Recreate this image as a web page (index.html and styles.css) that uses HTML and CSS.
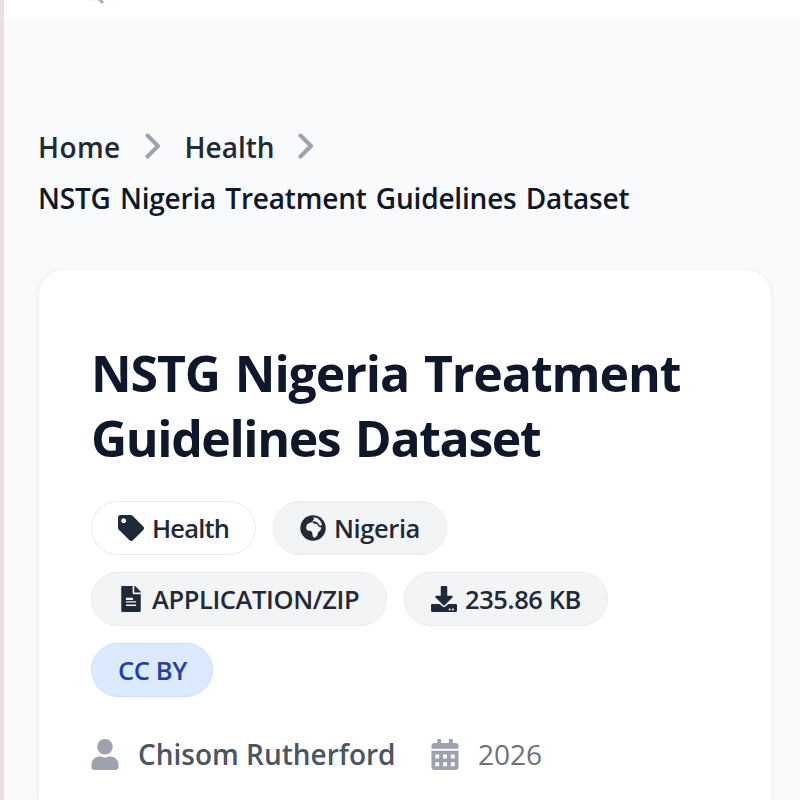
FILE: index.html
```
<!DOCTYPE html>
<html lang="en">
<head>
  <meta charset="UTF-8">
  <meta name="viewport" content="width=device-width, initial-scale=1.0">
  <title>NSTG Nigeria Treatment Guidelines Dataset</title>
  <link rel="stylesheet" href="styles.css">
</head>
<body>

  <header class="topbar">
    <svg class="search-icon" viewBox="0 0 24 24"><circle cx="10" cy="10" r="8"/><path class="handle" d="M17 17l5 5"/></svg>
  </header>

  <main class="page">
    <nav class="breadcrumb">
      <a class="crumb home" href="#">Home</a>
      <svg class="chevron" viewBox="0 0 16 26"><path d="M2.500 2.500L13 13 2.500 23.500"/></svg>
      <a class="crumb health" href="#">Health</a>
      <svg class="chevron" viewBox="0 0 16 26"><path d="M2.500 2.500L13 13 2.500 23.500"/></svg>
      <span class="current">NSTG Nigeria Treatment Guidelines Dataset</span>
    </nav>

    <section class="card">
      <h1 class="title">NSTG Nigeria Treatment<br><span class="title-end">Guidelines Dataset</span></h1>

      <div class="badges">
        <span class="badge badge-light">
          <svg class="icon" viewBox="0 0 512 512"><path d="M0 252.118V48C0 21.49 21.49 0 48 0h204.118a48 48 0 0 1 33.941 14.059l211.882 211.882c18.744 18.745 18.744 49.137 0 67.882L293.823 497.941c-18.745 18.744-49.137 18.744-67.882 0L14.059 286.059A48 48 0 0 1 0 252.118zM112 64c-26.51 0-48 21.49-48 48s21.49 48 48 48 48-21.49 48-48-21.49-48-48-48z"/></svg>
          <span>Health</span>
        </span>
        <span class="badge badge-region">
          <svg class="icon" viewBox="0 0 512 512"><circle cx="256" cy="256" r="250"/><path class="land" d="M180 158l65-22 30 34 60 6 40 60 48 8-24 62-44 40-18 62-50 44-36-28-10-75-25-36-72-10-26-48 18-66zM262 42l75 16 62 56 36 76-42 26-36-60-56-30-64-4 40-38z"/></svg>
          <span>Nigeria</span>
        </span>
        <span class="badge badge-format">
          <svg class="icon" viewBox="-64 0 512 512"><path d="M224 136V0H24C10.700 0 0 10.700 0 24v464c0 13.300 10.700 24 24 24h336c13.300 0 24-10.700 24-24V160H248c-13.200 0-24-10.800-24-24zM384 121.900v6.100H256V0h6.100c6.400 0 12.500 2.500 17 7l97.900 98c4.500 4.500 7 10.600 7 16.900z"/><path class="land" d="M92 230h140v44H92zM92 302h200v22H92zM92 362h200v30H92z"/></svg>
          <span>APPLICATION/ZIP</span>
        </span>
        <span class="badge badge-size">
          <svg class="icon" viewBox="0 0 512 512"><path d="M216 0h80c13.300 0 24 10.700 24 24v168h87.700c17.800 0 26.700 21.500 14.100 34.100L269.700 378.300c-7.500 7.500-19.800 7.500-27.300 0L90.100 226.100c-12.600-12.600-3.700-34.100 14.100-34.100H192V24c0-13.300 10.700-24 24-24zm296 376v112c0 13.300-10.700 24-24 24H24c-13.300 0-24-10.700-24-24V376c0-13.300 10.700-24 24-24h146.700l49 49c20.100 20.100 52.500 20.100 72.600 0l49-49H488c13.300 0 24 10.700 24 24zm-124 88c0-11-9-20-20-20s-20 9-20 20 9 20 20 20 20-9 20-20zm64 0c0-11-9-20-20-20s-20 9-20 20 9 20 20 20 20-9 20-20z"/></svg>
          <span>235.86 KB</span>
        </span>
        <span class="badge badge-license"><span>CC BY</span></span>
      </div>

      <div class="meta">
        <span class="meta-item author">
          <svg class="meta-icon" viewBox="0 0 448 512"><path d="M224 256c70.700 0 128-57.300 128-128S294.700 0 224 0 96 57.300 96 128s57.300 128 128 128zm89.600 32h-16.700c-22.200 10.200-46.900 16-72.900 16s-50.600-5.800-72.900-16h-16.700C60.200 288 0 348.200 0 422.400V464c0 26.500 21.500 48 48 48h352c26.500 0 48-21.500 48-48v-41.600c0-74.200-60.200-134.400-134.400-134.400z"/></svg>
          <span>Chisom Rutherford</span>
        </span>
        <span class="meta-item year">
          <svg class="meta-icon" viewBox="0 0 448 512"><path fill-rule="evenodd" d="M0 160v-48c0-26.500 21.500-48 48-48h48V12q0-12 12-12h40q12 0 12 12v52h128V12q0-12 12-12h40q12 0 12 12v52h48c26.500 0 48 21.500 48 48v48zM0 192h448v272c0 26.500-21.500 48-48 48H48c-26.500 0-48-21.500-48-48zM64 256v64h64v-64zM192 256v64h64v-64zM320 256v64h64v-64zM64 384v64h64v-64zM192 384v64h64v-64zM320 384v64h64v-64z"/></svg>
          <span>2026</span>
        </span>
      </div>
    </section>
  </main>

</body>
</html>
```

FILE: styles.css
```
* {
  box-sizing: border-box;
}
body {
  display: flex;
  flex-direction: column;
  margin: 0;
  height: 100vh;
  overflow: hidden;
  border-left: 4px solid #e9dfe5;
  background-color: #f8fafc;
  font-family: "Open Sans", "Noto Sans", sans-serif;
  color: #1f2937;
}
svg {
  display: block;
  flex: none;
}
.topbar {
  flex: none;
  height: 21px;
  padding-left: 77px;
  background-color: #fff;
  border-bottom: 1px solid #f6f8fa;
  overflow: hidden;
}
.search-icon {
  width: 24px;
  height: 24px;
  margin-top: -19px;
  fill: none;
  stroke: #e3e8ee;
  stroke-width: 3;
}
.search-icon .handle {
  stroke: #a3b3c6;
}
.page {
  flex: 1;
  display: flex;
  flex-direction: column;
  padding: 101px 28px 0 34px;
}
.breadcrumb {
  display: flex;
  flex-wrap: wrap;
  font-size: 28px;
  font-weight: 600;
  line-height: 51px;
}
.crumb {
  color: #1f2937;
  text-decoration: none;
}
.home {
  width: 83px;
  letter-spacing: 0.4px;
}
.health {
  width: 90px;
}
.chevron {
  width: 16px;
  height: 26px;
  margin: 11px 24px 0 23.500px;
  fill: none;
  stroke: #9ca3af;
  stroke-width: 4;
  stroke-linecap: round;
  stroke-linejoin: round;
}
.current {
  width: 100%;
  color: #0f172a;
  letter-spacing: -0.2px;
  word-spacing: 2.2px;
  white-space: nowrap;
}
.card {
  flex: 1;
  margin-top: 45px;
  padding: 71px 52px 0;
  background-color: #fff;
  border: 1px solid #f1f3f5;
  border-bottom: none;
  border-radius: 26px 26px 0 0;
  box-shadow: 0 1px 4px rgba(0, 0, 0, 0.06);
}
.title {
  margin: 0;
  font-size: 50px;
  line-height: 65px;
  font-weight: 700;
  letter-spacing: -1.1px;
  word-spacing: 3px;
  color: #0f172a;
  white-space: nowrap;
}
.title-end {
  letter-spacing: -1.4px;
}
.badges {
  display: flex;
  flex-wrap: wrap;
  gap: 17px;
  margin-top: 30px;
}
.badge {
  display: flex;
  align-items: center;
  gap: 8px;
  width: 165px;
  height: 54px;
  padding: 0 0 0 26px;
  border: 1px solid #e8eaee;
  border-radius: 28px;
  background-color: #f3f4f6;
  font-size: 25.500px;
  font-weight: 600;
  letter-spacing: -0.4px;
  white-space: nowrap;
}
.badge-light {
  background-color: #fff;
  letter-spacing: -0.8px;
}
.badge-region {
  width: 174px;
}
.badge-format {
  width: 296px;
}
.badge-size {
  width: 204px;
}
.badge-license {
  width: 122px;
  background-color: #dbeafe;
  border-color: #cfe0fa;
  color: #1e40af;
}
.icon {
  width: 26px;
  height: 26px;
  fill: #1f2937;
}
.icon .land {
  fill: #f3f4f6;
}
.meta {
  display: flex;
  margin-top: 37px;
  font-size: 28px;
  line-height: 40px;
  white-space: nowrap;
}
.meta-item {
  display: flex;
  align-items: center;
}
.meta-icon {
  width: 28px;
  height: 31px;
  margin-right: 19px;
  fill: #9ca3af;
}
.author {
  width: 340px;
  font-weight: 600;
  color: #4b5563;
}
.year {
  color: #6b7280;
}
```
